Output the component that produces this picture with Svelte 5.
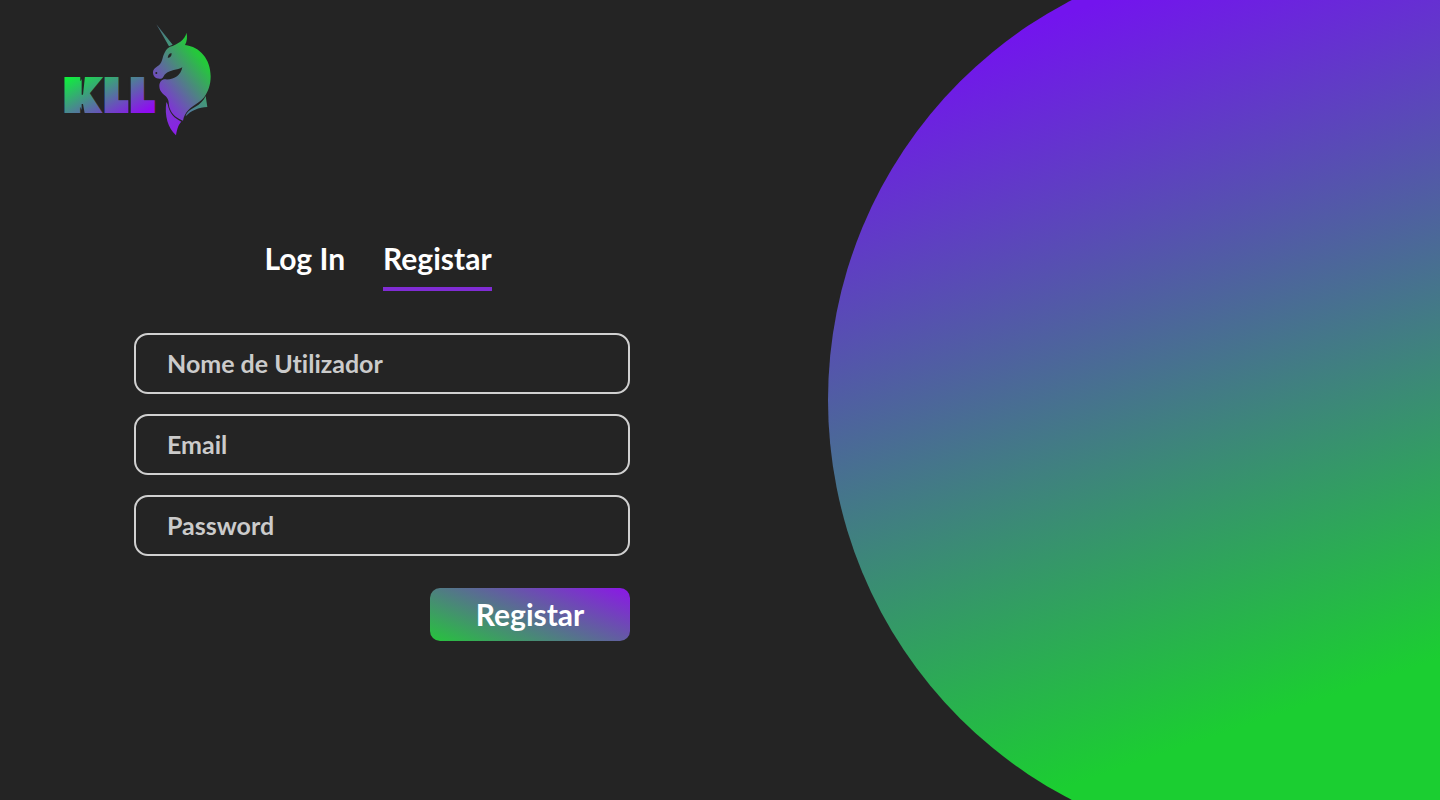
<script>
  let mode = $state('register');
  let username = $state('');
  let email = $state('');
  let password = $state('');
</script>

<div class="page">
  <main>
    <header>
      <svg class="logo" viewBox="30 24 456 336" role="img" aria-label="KLL">
        <defs>
          <linearGradient id="letters" gradientUnits="userSpaceOnUse" x1="40" y1="186" x2="138" y2="367">
            <stop offset="0" stop-color="#0cf438" />
            <stop offset="1" stop-color="#8f0cf2" />
          </linearGradient>
          <linearGradient id="head" gradientUnits="userSpaceOnUse" x1="458" y1="132" x2="322" y2="242">
            <stop offset="0" stop-color="#24c93a" />
            <stop offset="1" stop-color="#8130da" />
          </linearGradient>
          <linearGradient id="horn" gradientUnits="userSpaceOnUse" x1="320" y1="26" x2="364" y2="90">
            <stop offset="0" stop-color="#4d6c80" />
            <stop offset="1" stop-color="#42987a" />
          </linearGradient>
          <linearGradient id="nape" gradientUnits="userSpaceOnUse" x1="470" y1="245" x2="410" y2="300">
            <stop offset="0" stop-color="#3f9f70" />
            <stop offset="1" stop-color="#5572a4" />
          </linearGradient>
          <linearGradient id="mane" gradientUnits="userSpaceOnUse" x1="350" y1="260" x2="375" y2="358">
            <stop offset="0" stop-color="#7a3bcb" />
            <stop offset="1" stop-color="#8b1fe8" />
          </linearGradient>
        </defs>
        <text class="letters" y="280" fill="url(#letters)" stroke="url(#letters)"><tspan class="wide" x="50">K</tspan><tspan x="167 244">LL</tspan></text>
        <path class="cut" d="M95 180 H105 L99 236 H95 Z M95 264 H99 L105 298 H95 Z M235 182 H242 V298 H235 Z" />
        <path fill="url(#horn)" d="M319 25 L368 86 Q362 88 357 91 Z" />
        <path
          fill="url(#head)"
          d="M360 92 C380 87 407 70 409 50 C413 62 411 76 405 87 C450 92 482 130 482 181
             C482 207 474 228 463 243 C452 258 430 268 416 281 C406 290 401 302 399 314
             C382 308 366 297 359 277 C355 264 358 254 351 245 C345 236 328 230 328 210
             C328 198 336 190 345 190 C372 192 392 180 397 154 C382 164 360 160 346 174
             C339 181 340 187 333 188 C319 190 309 183 309 169 C310 157 320 153 327 148
             C339 136 337 121 345 108 C349 100 354 95 360 92 Z"
        />
        <path class="cut" d="M353 125 C354 117 359 111 365 112 C365 120 361 127 353 125 Z" />
        <circle class="cut" cx="319" cy="171" r="3" />
        <path fill="url(#mane)" d="M349 258 C343 300 354 336 378 358 C382 336 386 325 394 317 C374 308 358 292 353 265 Z" />
        <path fill="url(#nape)" d="M467 240 L472 273 C447 273 421 285 407 301 C409 288 421 281 435 273 C451 264 461 254 467 240 Z" />
      </svg>
    </header>

    <form onsubmit={(event) => event.preventDefault()}>
      <nav>
        <button type="button" class="tab" class:active={mode === 'login'} onclick={() => (mode = 'login')}>Log In</button>
        <button type="button" class="tab" class:active={mode === 'register'} onclick={() => (mode = 'register')}>Registar</button>
      </nav>
      <div class="fields">
        <input type="text" aria-label="Nome de Utilizador" placeholder="Nome de Utilizador" bind:value={username} />
        <input type="email" aria-label="Email" placeholder="Email" bind:value={email} />
        <input type="password" aria-label="Password" placeholder="Password" bind:value={password} />
      </div>
      <button type="submit" class="submit">Registar</button>
    </form>
  </main>
  <aside aria-hidden="true"><div class="disc"></div></aside>
</div>

<style>
  :global(body) {
    margin: 0;
    background: #242424;
  }

  .page {
    display: flex;
    min-height: 100vh;
    background: #242424;
    font-family: Lato, sans-serif;
    font-weight: 700;
    font-variant-ligatures: none;
    color: #fff;
  }

  main {
    flex: 1;
    min-width: 0;
    box-sizing: border-box;
    padding: 24px 60px;
  }

  .logo {
    display: block;
    width: 152px;
    height: 112px;
  }

  .letters {
    font-family: Lato, sans-serif;
    font-weight: 900;
    font-size: 116px;
    stroke-width: 24px;
  }

  .wide {
    font-family: Inter, sans-serif;
  }

  .cut {
    fill: #242424;
  }

  form {
    display: flex;
    flex-direction: column;
    max-width: 496px;
    margin: 103px 64px 0 74px;
  }

  nav {
    display: flex;
    justify-content: center;
    gap: 38px;
    margin-right: 8px;
  }

  button,
  input {
    font: inherit;
    font-variant-ligatures: none;
    color: inherit;
  }

  .tab {
    padding: 0 0 10px;
    border: 0;
    border-bottom: 4px solid transparent;
    background: none;
    font-size: 30px;
    line-height: 38px;
    cursor: pointer;
  }

  .tab.active {
    border-bottom-color: #802cd4;
  }

  .fields {
    display: flex;
    flex-direction: column;
    gap: 20px;
    margin-top: 42px;
  }

  input {
    box-sizing: border-box;
    width: 100%;
    height: 61px;
    padding: 0 31px 2px;
    border: 2px solid #d0d0d0;
    border-radius: 14px;
    background: none;
    font-size: 25px;
  }

  input::placeholder {
    color: #cbcbcb;
    opacity: 1;
  }

  .submit {
    align-self: flex-end;
    width: 200px;
    height: 53px;
    margin-top: 32px;
    padding: 0 0 2px;
    border: 0;
    border-radius: 10px;
    background: linear-gradient(22deg, #26c43c, #8c16e8);
    font-size: 30px;
    cursor: pointer;
  }

  aside {
    display: flex;
    flex: 0 0 42.5%;
    align-items: center;
    height: 100vh;
    overflow: hidden;
  }

  .disc {
    flex: none;
    height: 112.5vh;
    aspect-ratio: 1;
    border-radius: 50%;
    background: linear-gradient(161deg, #7314ee 12%, #1bce31 76%);
  }
</style>
